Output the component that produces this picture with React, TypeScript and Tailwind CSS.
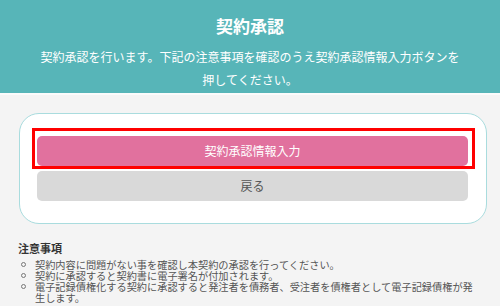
import React from "react";

const font = { fontFamily: '"Noto Sans CJK JP", "Noto Sans", sans-serif' };

export default function App() {
  const notes = [
    "契約内容に問題がない事を確認し本契約の承認を行ってください。",
    "契約に承認すると契約書に電子署名が付加されます。",
    "電子記録債権化する契約に承認すると発注者を債務者、受注者を債権者として電子記録債権が発生します。",
  ];
  return (
    <div
      className="w-[500px] h-[306px] overflow-hidden bg-[#f4f4f4] relative"
      style={font}
    >
      <div className="h-[95px] bg-[#57b5b8] border-b-[2px] border-[#fbfbfb] pt-[14px] text-white text-center">
        <div className="text-[17px] leading-[24px] font-bold">契約承認</div>
        <div className="mt-[7px] mx-auto w-[428px] text-[12px] leading-[23px]">
          契約承認を行います。下記の注意事項を確認のうえ契約承認情報入力ボタンを押してください。
        </div>
      </div>

      <div className="mt-[18px] ml-[19px] w-[468px] h-[111px] bg-white border border-[#a9dcde] rounded-[20px] pt-[14px]">
        <div className="ml-[12px] w-[443px] border-[3px] border-[#ff0000] pl-[2px] pr-[4px] pt-[5px]">
          <div className="h-[30px] rounded-[5px] bg-[#e1719e] text-white text-[12px] flex items-center justify-center">
            契約承認情報入力
          </div>
        </div>
        <div className="mt-[2px] ml-[17px] w-[431px] h-[30px] rounded-[5px] bg-[#d9d9d9] text-[#555555] text-[12px] flex items-center justify-center">
          戻る
        </div>
      </div>

      <div className="pl-[18px] pt-[17px]">
        <div className="text-[11px] leading-[14px] font-bold text-[#333333]">注意事項</div>
        <ul className="mt-[4px] w-[460px]">
          {notes.map((n, i) => (
            <li key={i} className="flex text-[10.2px] leading-[11px] text-[#555555]">
              <span className="w-[17px] shrink-0 h-[11px] flex items-center pl-[3px]">
                <span className="block w-[5px] h-[5px] rounded-full border border-[#777777]" />
              </span>
              <span>{n}</span>
            </li>
          ))}
        </ul>
      </div>
    </div>
  );
}
